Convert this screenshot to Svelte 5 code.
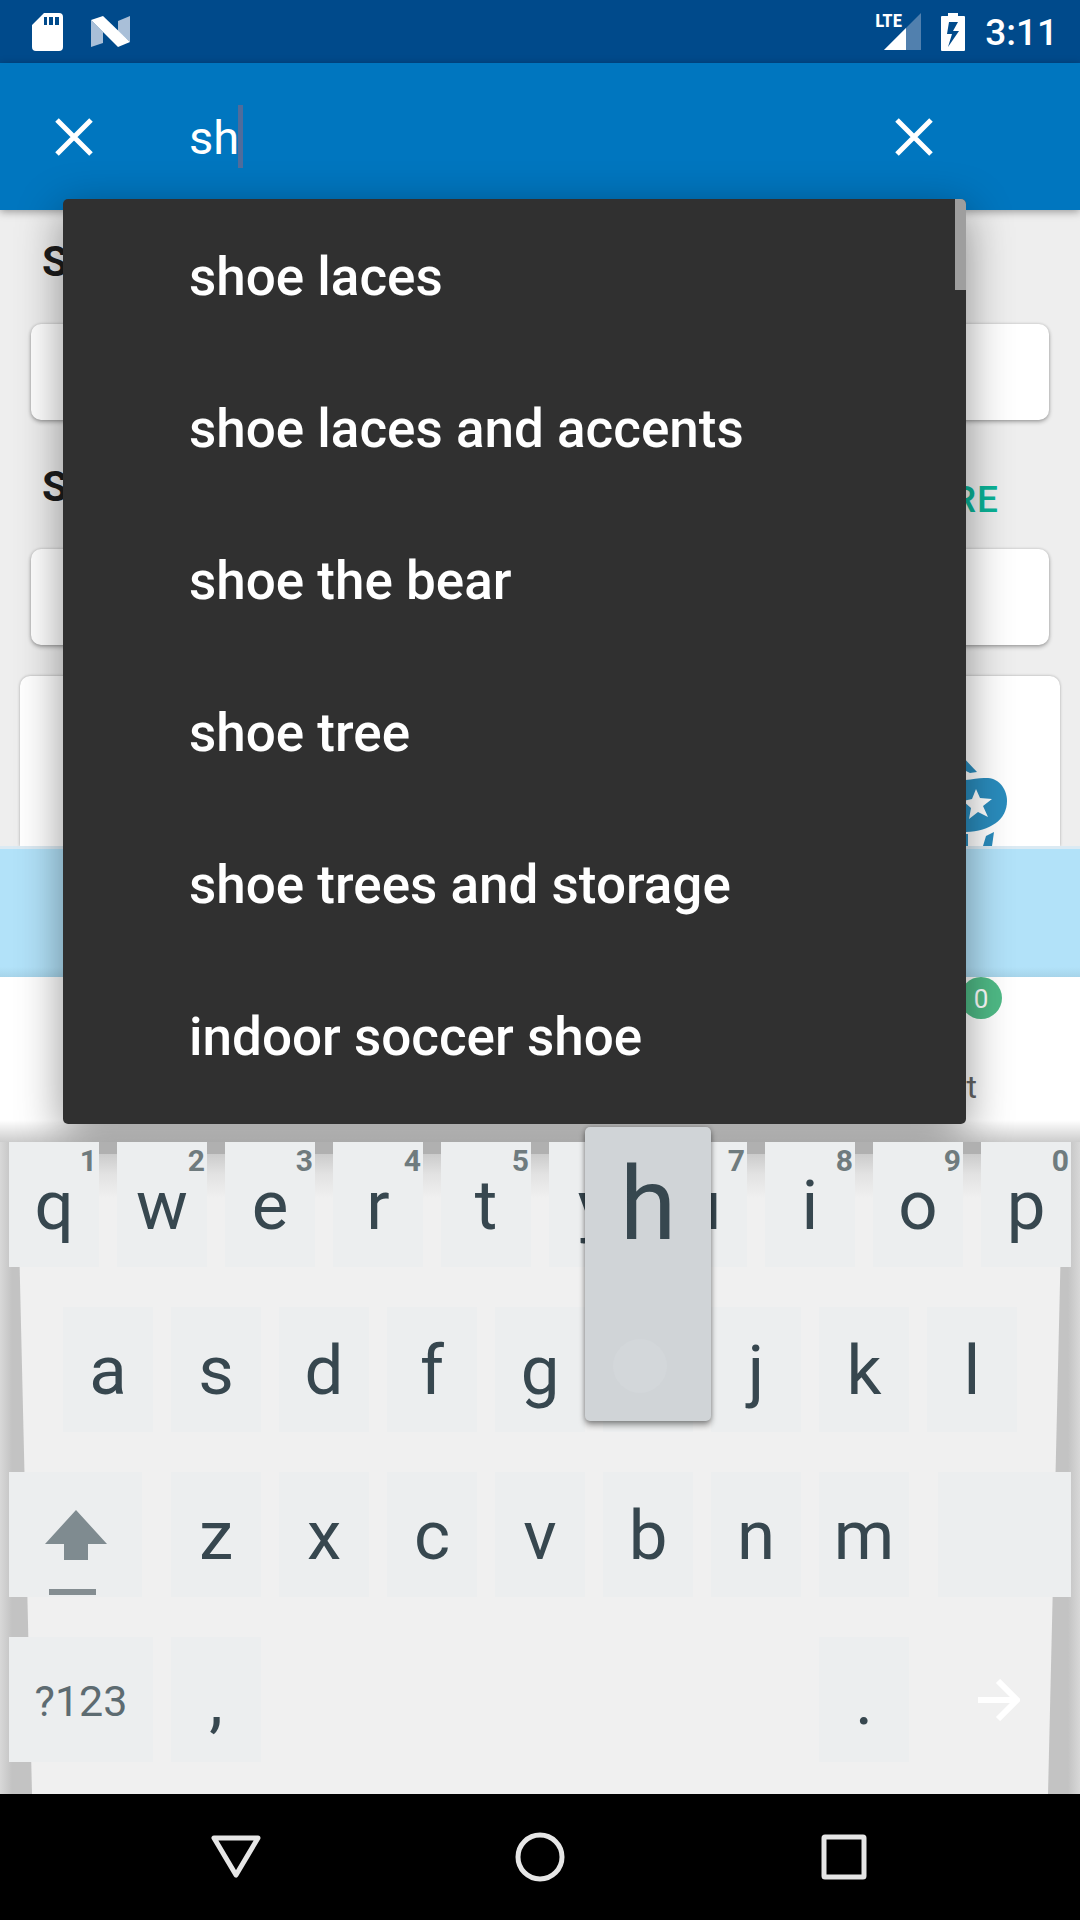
<script>
  let query = $state('sh');

  const suggestions = [
    'shoe laces',
    'shoe laces and accents',
    'shoe the bear',
    'shoe tree',
    'shoe trees and storage',
    'indoor soccer shoe'
  ];

  const topRow = [
    ['q', '1'], ['w', '2'], ['e', '3'], ['r', '4'], ['t', '5'],
    ['y', ''], ['u', '7'], ['i', '8'], ['o', '9'], ['p', '0']
  ];
  const homeRow = ['a', 's', 'd', 'f', 'g', 'h', 'j', 'k', 'l'];
  const bottomRow = ['z', 'x', 'c', 'v', 'b', 'n', 'm'];
  const pressed = 'h';

  const type = (letter) => (query += letter);
</script>

<div class="screen">
  <header class="status">
    <div class="status-group">
      <svg class="sd" viewBox="0 0 31 38" aria-hidden="true">
        <path fill="#fff" fill-rule="evenodd" d="M12 0H27Q31 0 31 4V34Q31 38 27 38H4Q0 38 0 34V12ZM12 4V12H15V4ZM17 4V12H21V4ZM23 4V12H27V4Z" />
      </svg>
      <svg class="nougat" viewBox="0 0 39 31" aria-hidden="true">
        <path fill="#a9bfd8" d="M0 4 12 16V27L0 31ZM27 5 39 0V26L27 15Z" />
        <path fill="#fff" d="M0 4 12 0 39 26 27 31Z" />
      </svg>
    </div>
    <div class="status-group right">
      <div class="signal">
        <svg viewBox="0 0 37 37" aria-hidden="true">
          <path fill="#5180ae" d="M37 0V37H0Z" />
          <path fill="#fff" d="M22 15V37H0Z" />
        </svg>
        <span class="lte">LTE</span>
      </div>
      <svg class="battery" viewBox="0 0 24 38" aria-hidden="true">
        <path fill="#fff" fill-rule="evenodd" d="M7 0H17V3H23Q24 3 24 4V37Q24 38 23 38H1Q0 38 0 37V4Q0 3 1 3H7ZM8 9 6 21H11L7 34 18 18H12L17 9Z" />
      </svg>
      <time class="clock">3:11</time>
    </div>
  </header>

  <div class="appbar">
    <button class="icon-button" aria-label="Close search">
      <svg viewBox="0 0 38 38"><path d="M2 2 36 36M36 2 2 36" /></svg>
    </button>
    <div class="search">
      <input type="text" aria-label="Search" bind:value={query} />
      <span class="caret"></span>
    </div>
    <button class="icon-button clear" aria-label="Clear text" onclick={() => (query = '')}>
      <svg viewBox="0 0 38 38"><path d="M2 2 36 36M36 2 2 36" /></svg>
    </button>

    <div class="suggestions">
      <ul>
        {#each suggestions as item}
          <li><button onclick={() => (query = item)}>{item}</button></li>
        {/each}
      </ul>
      <span class="scrollbar"></span>
    </div>
  </div>

  <main class="content">
    <div class="heading first"><h2>S</h2></div>
    <div class="card"></div>
    <div class="heading second"><h2>S</h2><a href="#more">RE</a></div>
    <div class="card"></div>
    <div class="card promo">
      <svg class="art" viewBox="0 0 60 96" aria-hidden="true">
        <g fill="#2a8cbd">
          <path d="M10 4 27 22 20 23 10 18Z" />
          <path d="M0 33C14 30 28 28 38 28 50 29 57 40 57 51 57 70 40 81 16 82H0Z" />
          <path d="M36 86 44 82 42 96H33ZM10 84H18V96H10Z" />
        </g>
        <path fill="#fff" d="M26 39 30 48 42 49 33 56 38 67 28 62 19 69 21 58 13 51 22 49Z" />
      </svg>
    </div>
  </main>

  <div class="banner"></div>

  <nav class="tabs" aria-label="Sections">
    <a href="#cart"><span class="badge">0</span><span class="tab-label">t</span></a>
  </nav>

  <section class="keyboard" aria-label="Keyboard">
    <div class="row">
      {#each topRow as [letter, digit]}
        <button class="key" onclick={() => type(letter)}>{letter}{#if digit}<span class="digit">{digit}</span>{/if}</button>
      {/each}
    </div>
    <div class="row home">
      {#each homeRow as letter}
        <button class="key" class:pressed={letter === pressed} onclick={() => type(letter)}>
          {#if letter === pressed}
            <span class="preview">{letter}<i class="touch"></i></span>
          {:else}{letter}{/if}
        </button>
      {/each}
    </div>
    <div class="row split">
      <button class="key shift" aria-label="Shift">
        <svg viewBox="0 0 62 86">
          <path fill="#7f8b90" d="M31 0 62 34H43V50H19V34H0Z" />
          <path fill="#848d91" d="M4 79H51V85H4Z" />
        </svg>
      </button>
      <div class="row letters">
        {#each bottomRow as letter}
          <button class="key" onclick={() => type(letter)}>{letter}</button>
        {/each}
      </div>
      <button class="key backspace" aria-label="Backspace"></button>
    </div>
    <div class="row">
      <button class="key symbols">?123</button>
      <button class="key" onclick={() => type(',')}>,</button>
      <button class="key space" aria-label="Space"></button>
      <button class="key" onclick={() => type('.')}>.</button>
      <button class="key enter" aria-label="Next">
        <svg viewBox="0 0 42 42"><path d="M0 21H38M20 2 39 21 20 40" /></svg>
      </button>
    </div>
  </section>

  <footer class="navbar">
    <button aria-label="Back">
      <svg viewBox="0 0 50 50"><path d="M3 6H47L25 43Z" /></svg>
    </button>
    <button aria-label="Home">
      <svg viewBox="0 0 50 50"><circle cx="25" cy="25" r="22" /></svg>
    </button>
    <button aria-label="Overview">
      <svg viewBox="0 0 50 50"><rect x="5" y="5" width="40" height="40" rx="1" /></svg>
    </button>
  </footer>
</div>

<style>
  :global(body) {
    margin: 0;
    background: #eee;
  }

  .screen {
    display: flex;
    flex-direction: column;
    min-height: 100vh;
    overflow: hidden;
    font-family: Roboto, 'Liberation Sans', sans-serif;
  }

  button {
    margin: 0;
    padding: 0;
    border: 0;
    background: none;
    color: inherit;
    font: inherit;
  }

  svg {
    display: block;
  }

  .status {
    display: flex;
    justify-content: space-between;
    align-items: center;
    height: 63px;
    padding: 0 22px 0 32px;
    background: #004a8b;
    color: #fff;
    box-sizing: border-box;
  }

  .status-group {
    display: flex;
    align-items: center;
    gap: 28px;
  }

  .status-group.right {
    gap: 20px;
  }

  .sd {
    width: 31px;
    height: 38px;
  }

  .nougat {
    width: 39px;
    height: 31px;
  }

  .signal {
    position: relative;
    padding-left: 9px;
  }

  .signal svg {
    width: 37px;
    height: 37px;
  }

  .lte {
    position: absolute;
    left: 0;
    top: 0;
    font: bold 19px/16px 'Liberation Sans Narrow', 'Roboto Condensed', Roboto, sans-serif;
  }

  .battery {
    width: 24px;
    height: 38px;
  }

  .clock {
    padding-top: 3px;
    font-size: 37px;
    font-weight: 500;
    line-height: 40px;
  }

  .appbar {
    position: relative;
    z-index: 2;
    display: flex;
    align-items: center;
    height: 147px;
    padding: 0 114px 0 21px;
    background: #0076bf;
    color: #fff;
    box-shadow: 0 2px 8px rgba(0, 0, 0, 0.35);
    box-sizing: border-box;
  }

  .icon-button {
    display: flex;
    align-items: center;
    justify-content: center;
    flex: none;
    width: 105px;
    height: 105px;
  }

  .icon-button svg {
    width: 38px;
    height: 38px;
    fill: none;
    stroke: #fff;
    stroke-width: 5;
  }

  .search {
    position: relative;
    flex: 1;
    margin-left: 63px;
  }

  .search input {
    display: block;
    width: 100%;
    height: 63px;
    padding: 2px 0 0;
    border: 0;
    outline: 0;
    background: none;
    color: #fff;
    font: 47px/60px Roboto, 'Liberation Sans', sans-serif;
    box-sizing: border-box;
  }

  .caret {
    position: absolute;
    left: 49px;
    top: 0;
    width: 5px;
    height: 63px;
    background: #4f6c9c;
  }

  .suggestions {
    position: absolute;
    top: 136px;
    left: 63px;
    right: 114px;
    height: 925px;
    overflow: hidden;
    border-radius: 5px;
    background: #303030;
  }

  .appbar::after {
    content: '';
    position: absolute;
    z-index: -1;
    top: 136px;
    left: 63px;
    right: 114px;
    height: 925px;
    border-radius: 5px;
    box-shadow: 0 12px 46px rgba(0, 0, 0, 0.42);
  }

  .suggestions ul {
    margin: 0;
    padding: 0;
    list-style: none;
  }

  .suggestions li button {
    display: block;
    width: 100%;
    height: 152px;
    padding: 4px 126px 0;
    text-align: left;
    font-size: 53px;
    font-weight: 500;
    line-height: 62px;
    white-space: nowrap;
  }

  .scrollbar {
    position: absolute;
    top: 0;
    right: 0;
    width: 11px;
    height: 91px;
    background: #9e9e9e;
  }

  .content {
    position: relative;
    flex: 1;
    display: flex;
    flex-direction: column;
    min-height: 636px;
    background: #eee;
  }

  .heading {
    display: flex;
    justify-content: space-between;
    align-items: flex-start;
    flex: none;
    padding: 0 81px 0 42px;
    box-sizing: border-box;
  }

  .heading.first {
    height: 114px;
    padding-top: 27px;
  }

  .heading.second {
    height: 129px;
    padding-top: 42px;
  }

  h2 {
    margin: 0;
    color: #1c1c1c;
    font-size: 42px;
    font-weight: 700;
    line-height: 50px;
  }

  .heading a {
    color: #0ab397;
    font-size: 37px;
    font-weight: 500;
    line-height: 76px;
    letter-spacing: 1px;
    text-decoration: none;
  }

  .card {
    flex: none;
    height: 96px;
    margin: 0 31px;
    border-radius: 10px;
    background: #fff;
    box-shadow: 0 2px 4px rgba(0, 0, 0, 0.3), 0 0 3px rgba(0, 0, 0, 0.15);
  }

  .card.promo {
    position: relative;
    flex: 1;
    margin: 31px 20px 0;
    border-radius: 10px 10px 0 0;
    box-shadow: 0 0 3px rgba(0, 0, 0, 0.3);
  }

  .art {
    position: absolute;
    right: 50px;
    bottom: 0;
    width: 60px;
    height: 96px;
  }

  .banner {
    position: relative;
    flex: none;
    height: 128px;
    border-top: 3px solid #dbeaf3;
    background: linear-gradient(#b2e2f9 118px, #a6d4ea);
  }

  .tabs {
    position: relative;
    display: flex;
    justify-content: flex-end;
    height: 165px;
    padding-right: 78px;
    background: #fff;
  }

  .tabs::after {
    content: '';
    position: absolute;
    inset: auto 0 0;
    height: 22px;
    background: linear-gradient(transparent, rgba(0, 0, 0, 0.2));
  }

  .tabs a {
    display: flex;
    flex-direction: column;
    justify-content: space-between;
    color: #666;
    text-decoration: none;
  }

  .badge {
    width: 42px;
    height: 42px;
    border-radius: 50%;
    background: #4fba86;
    color: #fff;
    font-size: 26px;
    line-height: 44px;
    text-align: center;
  }

  .tab-label {
    padding: 0 25px 35px 0;
    font-size: 32px;
    line-height: 40px;
    text-align: right;
  }

  .keyboard {
    position: relative;
    z-index: 3;
    display: flex;
    flex-direction: column;
    gap: 40px;
    padding: 0 9px 32px;
    background: linear-gradient(90deg, #d8d8d8, #c3c3c3 12px, #c3c3c3 calc(100% - 12px), #d8d8d8);
    color: #37474f;
  }

  .keyboard::before {
    content: '';
    position: absolute;
    inset: 0 9px auto;
    height: 12px;
    background: #b0b0b0;
  }

  .keyboard::after {
    content: '';
    position: absolute;
    z-index: -1;
    inset: 12px 0 0;
    background: linear-gradient(#cbcbcb, #e2e2e2 20px, #f0f0f0 44px);
    clip-path: polygon(17px 0, calc(100% - 17px) 0, calc(100% - 32px) 100%, 32px 100%);
  }

  .row {
    position: relative;
    display: flex;
    gap: 18px;
  }

  .row.home {
    z-index: 1;
    padding: 0 54px;
  }

  .row.split {
    justify-content: space-between;
  }

  .row.letters {
    flex: none;
    width: 69.492%;
  }

  .key {
    position: relative;
    flex: 1 1 0;
    min-width: 0;
    height: 125px;
    padding-top: 2px;
    background: #eceeef;
    font-size: 69px;
    line-height: 80px;
    text-align: center;
  }

  .key.pressed {
    z-index: 1;
  }

  .digit {
    position: absolute;
    top: 4px;
    right: 2px;
    color: #6f7b7e;
    font-size: 30px;
    font-weight: 700;
    line-height: 30px;
  }

  .preview {
    position: absolute;
    inset: -180px -18px 11px;
    border-radius: 5px;
    background: #d0d4d7;
    box-shadow: 0 4px 6px rgba(0, 0, 0, 0.4), 0 0 4px rgba(0, 0, 0, 0.2);
    font-size: 102px;
    line-height: 154px;
  }

  .touch {
    position: absolute;
    left: 28px;
    bottom: 28px;
    width: 54px;
    height: 54px;
    border-radius: 50%;
    background: #d3d7da;
  }

  .shift,
  .backspace {
    flex: none;
    width: 133px;
  }

  .shift svg {
    width: 62px;
    height: 86px;
    margin: 34px 36px 0;
  }

  .symbols {
    flex: none;
    width: 144px;
    color: #5d6b71;
    font-size: 43px;
  }

  .key.space {
    flex: 5.8 1 0;
    background: none;
  }

  .key.enter {
    display: flex;
    align-items: center;
    justify-content: center;
    flex: none;
    width: 144px;
    padding: 0;
    background: none;
  }

  .enter svg {
    width: 42px;
    height: 42px;
    fill: none;
    stroke: #fff;
    stroke-width: 6;
  }

  .navbar {
    display: flex;
    justify-content: center;
    align-items: center;
    gap: 254px;
    height: 126px;
    background: #000;
  }

  .navbar svg {
    width: 50px;
    height: 50px;
    fill: none;
    stroke: #e6e6e6;
    stroke-width: 5;
    stroke-linejoin: round;
  }
</style>
